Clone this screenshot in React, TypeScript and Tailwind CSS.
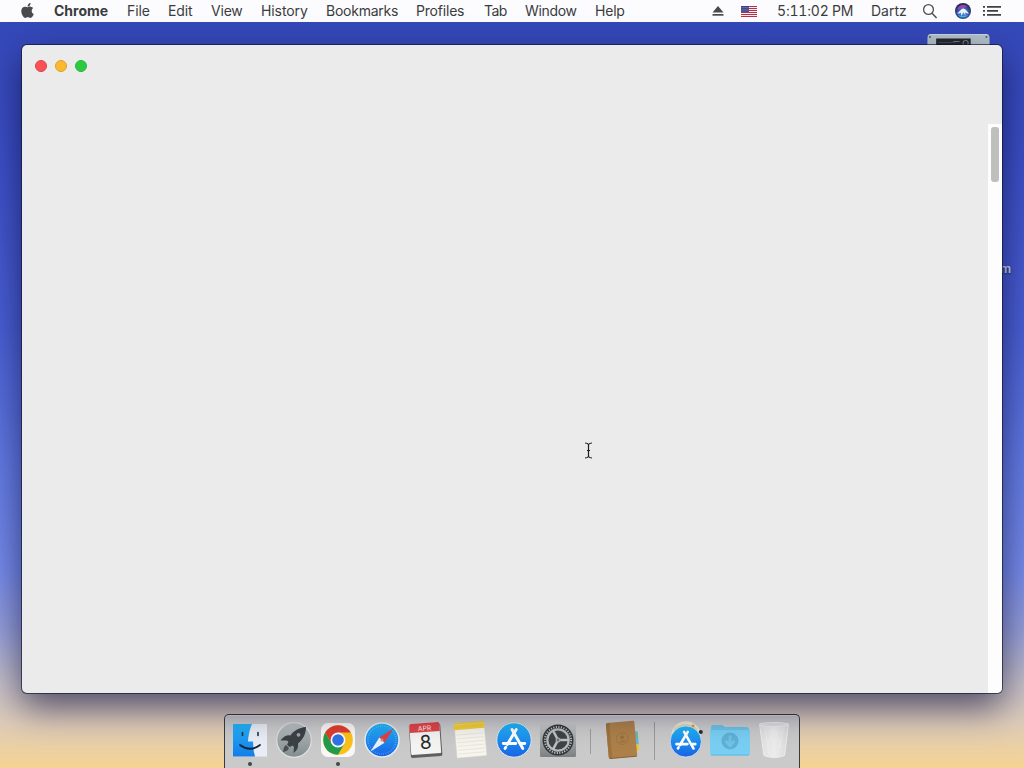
import type { ReactNode } from "react";
import { FaApple } from "react-icons/fa";

const menus: { label: string; cls: string }[] = [
  { label: "File", cls: "w-[41px] tracking-[-0.1px]" },
  { label: "Edit", cls: "w-[43px] tracking-[-0.1px]" },
  { label: "View", cls: "w-[50px] tracking-[-0.2px]" },
  { label: "History", cls: "w-[65px] tracking-[-0.1px]" },
  { label: "Bookmarks", cls: "w-[90px] tracking-[-0.25px]" },
  { label: "Profiles", cls: "w-[68px] tracking-[-0.2px]" },
  { label: "Tab", cls: "w-[41px] tracking-[-0.5px]" },
  { label: "Window", cls: "w-[70px] tracking-[-0.35px]" },
  { label: "Help", cls: "w-[40px] tracking-[-0.2px]" },
];

function Flag() {
  return (
    <svg width="16" height="11" viewBox="0 0 16 11">
      <rect width="16" height="11" fill="#f3e9ee" />
      {[0, 2, 4, 6, 8, 10].map((y) => (
        <rect key={y} y={y} width="16" height="1" fill="#b5324c" />
      ))}
      <rect width="8" height="6" fill="#3d3f86" />
      {[1, 3, 5, 7].map((x) => (
        <g key={x} fill="#b9b9dc">
          <rect x={x - 0.4} y="1" width=".8" height=".8" />
          <rect x={x - 0.4} y="2.8" width=".8" height=".8" />
          <rect x={x - 0.4} y="4.5" width=".8" height=".8" />
        </g>
      ))}
    </svg>
  );
}

function Siri() {
  return (
    <svg width="16" height="16" viewBox="0 0 16 16">
      <defs>
        <radialGradient id="siri" cx=".5" cy=".6" r=".55">
          <stop offset="0" stopColor="#5aa9e8" />
          <stop offset=".6" stopColor="#3a55b0" />
          <stop offset="1" stopColor="#26264a" />
        </radialGradient>
      </defs>
      <circle cx="8" cy="8" r="8" fill="url(#siri)" />
      <path d="M2.500 6.500C3 2 9 .5 12.500 3.500 10.500 4 9 4.500 8 6 6.500 5.500 4 5.500 2.500 6.500Z" fill="#b544b4" opacity=".8" />
      <path d="M2 10C4.500 9.500 5.500 6 8.500 5.500 11 6 12 8.500 14 10.500 12 10.500 11 10 10 9.500L10.500 13 8.500 9 6 13 6 9.500C5 10.500 3.500 11 2 10Z" fill="#e6f6fc" />
      <path d="M3 12C5 15 11 15 13 12 10 13.500 6 13.500 3 12Z" fill="#39c3d8" />
    </svg>
  );
}

function MenuBar() {
  return (
    <header className="flex h-[22px] shrink-0 items-center bg-[#fcfbfd] pl-5 text-[14px] leading-[22px] whitespace-nowrap text-[#3b3b3d]">
      <FaApple className="h-[17px] w-[15px] -translate-y-px text-[#4a4a4c]" />
      <span className="ml-[19px] w-[73px] font-bold">Chrome</span>
      {menus.map((m) => (
        <span key={m.label} className={m.cls}>
          {m.label}
        </span>
      ))}
      <div className="ml-auto flex items-center pr-[23px]">
        <svg width="12" height="10" viewBox="0 0 12 10" fill="#4a4a4c">
          <path d="M6 0 11.500 6.500H.5Z" />
          <rect x=".5" y="8" width="11" height="1.700" />
        </svg>
        <span className="ml-[17px]">
          <Flag />
        </span>
        <span className="ml-5 w-[94px] tracking-[-0.2px] tabular-nums">5:11:02 PM</span>
        <span className="w-[51px]">Dartz</span>
        <svg width="16" height="16" viewBox="0 0 16 16" fill="none" stroke="#4f4f51" strokeWidth="1.300">
          <circle cx="6.500" cy="6.500" r="4.900" />
          <path d="M10 10.200 14.600 15" strokeWidth="1.500" />
        </svg>
        <span className="ml-[17px]">
          <Siri />
        </span>
        <svg className="ml-3" width="18" height="12" viewBox="0 0 18 12" fill="#404042">
          <path d="M0 1h2v1.700H0zM0 5h2v1.700H0zM0 9h2v1.700H0zM4 1h14v1.700H4zM4 5h11v1.700H4zM4 9h14v1.700H4z" />
        </svg>
      </div>
    </header>
  );
}

function Drive() {
  return (
    <svg width="63" height="30" viewBox="0 0 62 30" preserveAspectRatio="none">
      <path d="M3 0H59Q61 0 61.500 3L62 30H0L.5 3Q1 0 3 0Z" fill="#b5c4cc" />
      <path d="M3 .5H59" stroke="#ccd8e0" />
      <circle cx="3" cy="3" r="1" fill="#45606f" />
      <circle cx="58.500" cy="3" r="1" fill="#45606f" />
      <rect x="9" y="4.500" width="34" height="20" fill="#26292d" />
      <path d="M11 8.500H27" stroke="#44494d" />
      <path d="M26 7.500H32" stroke="#8b9093" strokeWidth=".8" />
      <circle cx="38" cy="9" r="2.600" fill="none" stroke="#9ba0a4" strokeWidth=".8" />
    </svg>
  );
}

function AppStoreGlyph() {
  return (
    <g stroke="#fff" strokeWidth="2.900" strokeLinecap="round" fill="none">
      <path d="M16 7.500 26.800 26.500" />
      <path d="M20.200 7.500 11.300 22.500" />
      <path d="M7.300 21.500H19.800M25 21.500H28.800" />
      <path d="M9.800 25.200 9 26.500" />
    </g>
  );
}

function Icon({ children, running }: { children: ReactNode; running?: boolean }) {
  return (
    <div className="flex w-11 shrink-0 flex-col items-center">
      <svg width="38" height="40" viewBox="-1 -2 38 40" className="overflow-visible">
        {children}
      </svg>
      {running && <span className="mt-[2px] h-1 w-1 rounded-full bg-[#454545]" />}
    </div>
  );
}

const range = (n: number) => Array.from({ length: n }, (_, i) => i);

function Dock() {
  return (
    <footer className="flex h-[54px] w-[576px] shrink-0 rounded-t-[5px] border border-b-0 border-[#3b3a43] bg-[#cbcaca] px-[3px] pt-[5px] shadow-[inset_0_1px_0_#dfdfe1]">
      <svg width="0" height="0" className="absolute">
        <defs>
          <linearGradient id="blue" x1="0" y1="0" x2="0" y2="1">
            <stop offset="0" stopColor="#22b7f8" />
            <stop offset="1" stopColor="#1862e4" />
          </linearGradient>
          <linearGradient id="silver" x1="0" y1="0" x2="0" y2="1">
            <stop offset="0" stopColor="#bcc2c3" />
            <stop offset="1" stopColor="#828c8e" />
          </linearGradient>
          <linearGradient id="face" x1="0" y1="0" x2="0" y2="1">
            <stop offset="0" stopColor="#25b4f8" />
            <stop offset="1" stopColor="#137de9" />
          </linearGradient>
          <linearGradient id="prefs" x1="0" y1="0" x2="0" y2="1">
            <stop offset="0" stopColor="#c8caca" />
            <stop offset="1" stopColor="#7d8080" />
          </linearGradient>
          <linearGradient id="bin" x1="0" y1="0" x2="1" y2="0">
            <stop offset="0" stopColor="#dededf" />
            <stop offset=".5" stopColor="#ececed" />
            <stop offset="1" stopColor="#d9d9da" />
          </linearGradient>
        </defs>
      </svg>

      <Icon running>
        <rect x="1" y="2" width="34" height="32.500" fill="#e9edf5" />
        <path d="M1 2H20Q16.500 10 16 19.500H21Q21 28 23 34.500H1Z" fill="url(#face)" />
        <path d="M10.500 10.500v3M26 10.500v3" stroke="#183046" strokeWidth="1.600" strokeLinecap="round" />
        <path d="M8 23Q18 30.500 28 23" fill="none" stroke="#152638" strokeWidth="1.800" strokeLinecap="round" />
      </Icon>

      <Icon>
        <circle cx="18" cy="18" r="17.300" fill="url(#silver)" stroke="#dce0e1" strokeWidth="1.200" />
        <path d="M30 5C23 5.500 17.500 9 14.500 13.500Q9 12.500 4.500 18.500L11 18.500 12.500 20 11 22.500 13.500 25 16.500 23.500 18 25 17.500 31Q23 27 22 21.500C27 17.500 30 12 30 5Z" fill="#3b4145" />
        <circle cx="22.500" cy="12.800" r="1.900" fill="#9da5a8" />
        <path d="M10 23C8 24 7.500 27 7 30 10 29.500 12.500 28.500 13 26Z" fill="#4a5154" />
      </Icon>

      <Icon running>
        <rect x="1" y="1" width="34" height="34" rx="7" fill="#f8f8f7" />
        <circle cx="18" cy="18" r="14.800" fill="#fbc11a" />
        <path d="M5.200 10.600A14.800 14.800 0 0 1 30.800 10.600H18L11.600 21.700Z" fill="#df3d31" />
        <path d="M5.200 10.600A14.800 14.800 0 0 0 18 32.800L24.400 21.700 18 25.200 11.600 21.700Z" fill="#219b4c" />
        <circle cx="18" cy="18" r="7.400" fill="#fff" />
        <circle cx="18" cy="18" r="5.800" fill="#2f73e6" />
      </Icon>

      <Icon>
        <circle cx="18" cy="18" r="17" fill="url(#blue)" stroke="#e6edf2" strokeWidth="1.500" />
        <circle cx="18" cy="18" r="14" fill="none" stroke="#b7ddf6" strokeWidth="1.600" strokeDasharray=".6 1.600" opacity=".5" />
        <path d="M29.500 6.500 20.500 20.700 15.300 15.500Z" fill="#e2403f" />
        <path d="M6.500 29.500 15.300 15.500 20.500 20.700Z" fill="#edf1f5" />
        <circle cx="18" cy="18" r="1.500" fill="#cf8a90" />
      </Icon>

      <Icon>
        <g transform="translate(-.7 0) rotate(-4 18 18)">
          <rect x="2.500" y="2.500" width="31.500" height="32.500" rx="1.500" fill="#5f5f60" />
          <rect x="3" y="1" width="30" height="31" rx="1" fill="#f4f4f3" />
          <path d="M3 10V2.500Q3 1 4.500 1H31.500Q33 1 33 2.500V10Z" fill="#de4547" />
          <text x="18" y="8.600" textAnchor="middle" fontSize="6.800" fill="#ffe9e7" fontFamily="Inter">
            APR
          </text>
          <text x="18.300" y="27" textAnchor="middle" fontSize="19" fill="#29292a" fontFamily="Inter">
            8
          </text>
        </g>
      </Icon>

      <Icon>
        <g transform="rotate(-5 18 18)">
          <rect x="3.500" y=".5" width="30" height="34.500" fill="#f7f5ec" stroke="#d1cfc8" strokeWidth=".5" />
          <rect x="3" y="0" width="30.500" height="7" fill="#f2cd38" />
          <path d="M3 2H33.500" stroke="#f7dc66" strokeWidth="1" />
          {range(6).map((i) => (
            <path key={i} d={`M5 ${12 + i * 3.8}H32`} stroke="#e2e0d8" strokeWidth=".7" />
          ))}
        </g>
      </Icon>

      <Icon>
        <circle cx="18" cy="18" r="17.200" fill="url(#blue)" stroke="#d9e8f3" strokeWidth="1" />
        <AppStoreGlyph />
      </Icon>

      <Icon>
        <rect x="0" y="1" width="36" height="34" rx="1.500" fill="url(#prefs)" />
        <circle cx="18" cy="18" r="15.500" fill="#33373a" />
        <circle cx="18" cy="18" r="13.100" fill="none" stroke="#b9bdbd" strokeWidth="2" strokeDasharray="1.200 1.370" />
        <circle cx="18" cy="18" r="10.700" fill="#3f4345" stroke="#b9bcbc" strokeWidth="2.200" />
        <path d="M18 18 13 8.500M18 18 13 27.500M18 18H28.500" stroke="#bcc0c0" strokeWidth="2.600" />
        <circle cx="18" cy="18" r="2.500" fill="#a5aaaa" />
        <circle cx="18" cy="18" r=".9" fill="#54595a" />
      </Icon>

      <div className="flex w-5 justify-center pt-[9px]">
        <span className="h-[25px] w-px bg-[#9b9b9d]" />
      </div>

      <Icon>
        <g transform="translate(.3 -.3) rotate(-5 18 18)">
          <path d="M31 11h3v8h-3z" fill="#65b9ac" />
          <path d="M31 18h3v6h-3z" fill="#68b4dc" />
          <path d="M30 24h4v6h-4z" fill="#e8ca37" />
          <rect x="3" y="0" width="28.500" height="36" rx="1.500" fill="#ad8049" />
          <path d="M3 2Q3 0 5 0H6.500V36H5Q3 36 3 34Z" fill="#9d733e" />
          <path d="M4 35.700H31" stroke="#7d5b2e" strokeWidth=".8" />
          <circle cx="18" cy="17" r="5.800" fill="none" stroke="#9c7140" strokeWidth=".8" />
          <circle cx="18" cy="15.500" r="2" fill="#9a6f3f" />
          <path d="M14.500 20.500Q18 17 21.500 20.500" fill="#9a6f3f" />
        </g>
      </Icon>

      <div className="flex w-5 justify-center pt-[2px]">
        <span className="h-[38px] w-px bg-[#99999b]" />
      </div>

      <Icon>
        <circle cx="18" cy="14" r="14.700" fill="#eceae0" />
        <path d="M5 7Q17-3 30 7L28 10H8Z" fill="#e4d6a6" />
        <circle cx="25" cy="4" r="1.500" fill="#e39639" />
        <circle cx="32.800" cy="10" r="2" fill="#272a2d" />
        <circle cx="17.800" cy="19.500" r="15.600" fill="url(#blue)" stroke="#dde9f2" strokeWidth=".8" />
        <g transform="translate(2 3.200) scale(.88)">
          <AppStoreGlyph />
        </g>
      </Icon>

      <Icon>
        <path d="M-1 5Q-1 3 1 3H10L13 5H34.500Q36.500 5 37 7V12H-1Z" fill="#6cc2e8" />
        <path d="M-2 8H38V31.500Q38 33.500 36 33.500H0Q-2 33.500-2 31.500Z" fill="#79cff3" />
        <path d="M-1 33H37" stroke="#60b5dc" />
        <circle cx="18" cy="19" r="8.500" fill="#5fb2d7" />
        <path d="M18 13.500V23M13.500 19 18 23.500 22.500 19" fill="none" stroke="#72c4e7" strokeWidth="2.800" />
      </Icon>

      <Icon>
        <path d="M3.500 2Q18-.5 32.500 2L28.500 33.500Q18 37.500 8 33.500Z" fill="url(#bin)" stroke="#eeeeef" />
        <ellipse cx="18" cy="2.500" rx="14.500" ry="2" fill="#dededf" stroke="#f3f3f3" strokeWidth=".8" />
        <path d="M9 6 13 33M27 6 22 33M17 8 12 23M20 10 25 26" stroke="#fff" opacity=".25" />
      </Icon>
    </footer>
  );
}

export default function App() {
  return (
    <div className="relative flex h-[768px] w-[1024px] flex-col overflow-hidden bg-[linear-gradient(180deg,#3347b6_0px,#3c4fc6_150px,#4a5fd4_330px,#647ce4_470px,#768bea_570px,#969fd8_630px,#c2bdc9_680px,#e0cdb9_725px,#f5d391_768px)] font-['Inter','Liberation_Sans',sans-serif]">
      <MenuBar />
      <div className="absolute top-[34px] left-[927px]">
        <Drive />
      </div>
      <span className="absolute top-[261px] right-[13px] text-[12px] leading-4 font-semibold text-[#d9e1fa] [text-shadow:0_1px_2px_#1c2560]">
        Custom
      </span>

      <main className="relative mt-[23px] ml-[22px] flex h-[648px] w-[980px] shrink-0 flex-col overflow-hidden rounded-[5px] bg-[#ebebeb] shadow-[0_0_0_1px_rgba(15,18,45,0.65),0_14px_36px_0_rgba(0,0,40,0.62)]">
        <div className="flex h-[79px] shrink-0 items-start gap-2 pt-[15px] pl-[13px]">
          <span className="h-3 w-3 rounded-full border border-[#e04147] bg-[#fb5156]" />
          <span className="h-3 w-3 rounded-full border border-[#dda126] bg-[#fbb92d]" />
          <span className="h-3 w-3 rounded-full border border-[#27b73c] bg-[#2cca43]" />
        </div>
        <div className="flex flex-1 justify-end">
          <div className="flex w-[14px] justify-center bg-[#fcfdfc] pt-[3px]">
            <span className="h-[55px] w-2 rounded-[3px] bg-[#bec0be]" />
          </div>
        </div>
      </main>

      <div className="mt-[21px] flex shrink-0 justify-center">
        <Dock />
      </div>

      <svg className="absolute top-[442px] left-[584px]" width="9" height="17" viewBox="0 0 9 17" fill="none" stroke="#1c1c1c" strokeWidth="1.200">
        <path d="M1 1Q3.500 1 4.500 2.500 5.500 1 8 1M4.500 2.500V14.500M1 16Q3.500 16 4.500 14.500 5.500 16 8 16M3 8.500H6" />
      </svg>
    </div>
  );
}
